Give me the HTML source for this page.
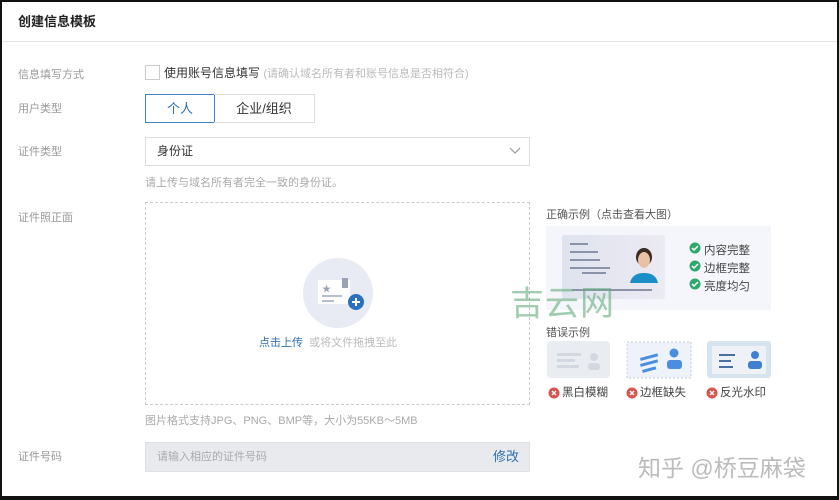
<!DOCTYPE html>
<html><head><meta charset="utf-8"><style>
*{margin:0;padding:0;box-sizing:border-box}
body{width:839px;height:500px;background:#111;position:relative;overflow:hidden;font-family:"Liberation Sans","Noto Sans CJK SC",sans-serif;font-size:12px;color:#333}
#p{position:absolute;left:2px;top:2px;width:835px;height:494px;background:#fff}
.a{position:absolute;white-space:nowrap}
.lbl{color:#999;font-size:11px}
.hint{color:#aaa;font-size:11px}
</style></head><body>
<div id="p">
<div class="a" style="left:16px;top:9px;font-size:13px;color:#222;font-weight:bold">创建信息模板</div>
<div class="a" style="left:0;top:39px;width:835px;height:1px;background:#e6e6e6"></div>

<div class="a lbl" style="left:16px;top:64px">信息填写方式</div>
<div class="a" style="left:143px;top:63px;width:15px;height:15px;border:1px solid #ccc"></div>
<div class="a" style="left:162px;top:62px;font-size:12px;color:#333">使用账号信息填写 <span style="color:#bbb;font-size:11px">(请确认域名所有者和账号信息是否相符合)</span></div>

<div class="a lbl" style="left:16px;top:98px">用户类型</div>
<div class="a" style="left:143px;top:92px;width:70px;height:29px;border:1px solid #3f86c9;text-align:center;line-height:27px;color:#2d6fb0;font-size:13px">个人</div>
<div class="a" style="left:212px;top:92px;width:101px;height:29px;border:1px solid #ddd;border-left:none;text-align:center;line-height:27px;color:#333;font-size:13px">企业/组织</div>

<div class="a lbl" style="left:16px;top:141px">证件类型</div>
<div class="a" style="left:143px;top:135px;width:385px;height:29px;border:1px solid #ddd;padding-left:11px;line-height:27px;color:#333">身份证
<svg style="position:absolute;right:8px;top:9px" width="12" height="8"><path d="M1 1l5 5 5-5" fill="none" stroke="#999" stroke-width="1.2"/></svg></div>
<div class="a hint" style="left:143px;top:172px">请上传与域名所有者完全一致的身份证。</div>

<div class="a lbl" style="left:16px;top:207px">证件照正面</div>
<div class="a" style="left:143px;top:200px;width:385px;height:203px;border:1px dashed #ccc"></div>
<div class="a" style="left:301px;top:256px;width:70px;height:70px;border-radius:50%;background:#e8ebf3"></div>
<svg class="a" style="left:314px;top:270px" width="50" height="42">
<rect x="2" y="8" width="32" height="24" fill="#fff"/>
<rect x="26" y="6" width="6" height="10" fill="#9aa3b6"/>
<text x="6" y="20" font-size="9" fill="#9aa3b6">★</text>
<rect x="6" y="23" width="20" height="2" fill="#b8bfcc"/>
<rect x="6" y="28" width="12" height="2" fill="#b8bfcc"/>
<circle cx="40" cy="30" r="8" fill="#2a6fc1"/>
<path d="M36 30h8M40 26v8" stroke="#fff" stroke-width="2"/>
</svg>
<div class="a" style="left:257px;top:332px;font-size:11px;color:#2d6fb0">点击上传 <span style="color:#bbb">&nbsp;或将文件拖拽至此</span></div>
<div class="a hint" style="left:143px;top:410px">图片格式支持JPG、PNG、BMP等，大小为55KB～5MB</div>

<div class="a lbl" style="left:16px;top:446px">证件号码</div>
<div class="a" style="left:143px;top:440px;width:385px;height:30px;background:#e8eaee;border:1px solid #dde0e5;padding-left:11px;line-height:28px;color:#aaa;font-size:11px">请输入相应的证件号码
<span style="position:absolute;right:10px;color:#2d6fb0;font-size:13px">修改</span></div>

<div class="a" style="left:544px;top:204px;font-size:11px;color:#555">正确示例（点击查看大图）</div>
<div class="a" style="left:544px;top:224px;width:225px;height:84px;background:#f4f6fb"></div>
<svg class="a" style="left:560px;top:233px" width="103" height="64">
<defs><linearGradient id="g" x1="0" x2="1"><stop offset="0" stop-color="#dfe3ee"/><stop offset="1" stop-color="#eceaf3"/></linearGradient></defs>
<rect x="0" y="0" width="103" height="64" rx="2" fill="url(#g)"/>
<g fill="#8a93a8"><rect x="8" y="8" width="18" height="2"/><rect x="8" y="16" width="28" height="2"/><rect x="8" y="24" width="30" height="2"/><rect x="8" y="32" width="40" height="2"/><rect x="20" y="37" width="24" height="2"/><rect x="10" y="54" width="80" height="2"/></g>
<ellipse cx="82" cy="22" rx="8" ry="9" fill="#3a2a22"/>
<ellipse cx="82" cy="25" rx="6" ry="8" fill="#e9c2a6"/>
<path d="M68 48q2-10 14-10t14 10z" fill="#1a8fc7"/>
</svg>
<svg class="a" style="left:687px;top:240px" width="12" height="52"><g fill="#2fa86b"><circle cx="6" cy="6" r="5.5"/><circle cx="6" cy="24" r="5.5"/><circle cx="6" cy="42" r="5.5"/></g><g fill="none" stroke="#fff" stroke-width="1.5"><path d="M3 6l2 2 4-4"/><path d="M3 24l2 2 4-4"/><path d="M3 42l2 2 4-4"/></g></svg>
<div class="a" style="left:702px;top:240px;font-size:11.5px;color:#444;line-height:18px">内容完整<br>边框完整<br>亮度均匀</div>

<div class="a" style="left:508px;top:274px;font-size:34px;color:#67ad7e;opacity:.6;letter-spacing:1px">吉云网</div>

<div class="a" style="left:544px;top:322px;font-size:11px;color:#555">错误示例</div>
<svg class="a" style="left:545px;top:339px" width="226" height="40">
<rect x="0" y="0" width="63" height="37" rx="4" fill="#e9ecf1"/>
<g fill="#d3d8e0"><rect x="10" y="12" width="24" height="3"/><rect x="10" y="18" width="18" height="3"/><rect x="10" y="24" width="22" height="3"/><circle cx="47" cy="16" r="4"/><rect x="41" y="22" width="12" height="7" rx="3"/></g>
<rect x="80" y="1" width="64" height="36" fill="#eef2fa" stroke="#c8cdd6" stroke-dasharray="2 2"/>
<g fill="#4a8ee0"><rect x="93" y="17" width="18" height="3" transform="rotate(-15 93 17)"/><rect x="93" y="23" width="18" height="3" transform="rotate(-15 93 23)"/><rect x="95" y="29" width="14" height="3" transform="rotate(-15 95 29)"/><circle cx="127" cy="12" r="4.5"/><rect x="120" y="19" width="15" height="9" rx="3"/></g>
<rect x="160" y="0" width="64" height="37" rx="3" fill="#d6e4f0"/>
<rect x="165" y="5" width="54" height="28" fill="#eef2f6"/>
<g fill="#4a6fa0"><rect x="172" y="13" width="16" height="2"/><rect x="172" y="19" width="12" height="2"/><rect x="172" y="25" width="14" height="2"/></g>
<g fill="#3f7fcf"><circle cx="208" cy="14" r="4"/><rect x="201" y="20" width="14" height="8" rx="3"/></g>
</svg>
<svg class="a" style="left:546px;top:385px" width="170" height="12"><g fill="#d9534f"><circle cx="6" cy="6" r="5.5"/><circle cx="84" cy="6" r="5.5"/><circle cx="164" cy="6" r="5.5"/></g><g stroke="#fff" stroke-width="1.4"><path d="M4 4l4 4M8 4l-4 4"/><path d="M82 4l4 4M86 4l-4 4"/><path d="M162 4l4 4M166 4l-4 4"/></g></svg>
<div class="a" style="left:560px;top:382px;font-size:11.5px;color:#444">黑白模糊</div>
<div class="a" style="left:638px;top:382px;font-size:11.5px;color:#444">边框缺失</div>
<div class="a" style="left:718px;top:382px;font-size:11.5px;color:#444">反光水印</div>

<div class="a" style="left:636px;top:447px;font-size:23px;color:#bbb">知乎 @桥豆麻袋</div>
</div>
</body></html>
